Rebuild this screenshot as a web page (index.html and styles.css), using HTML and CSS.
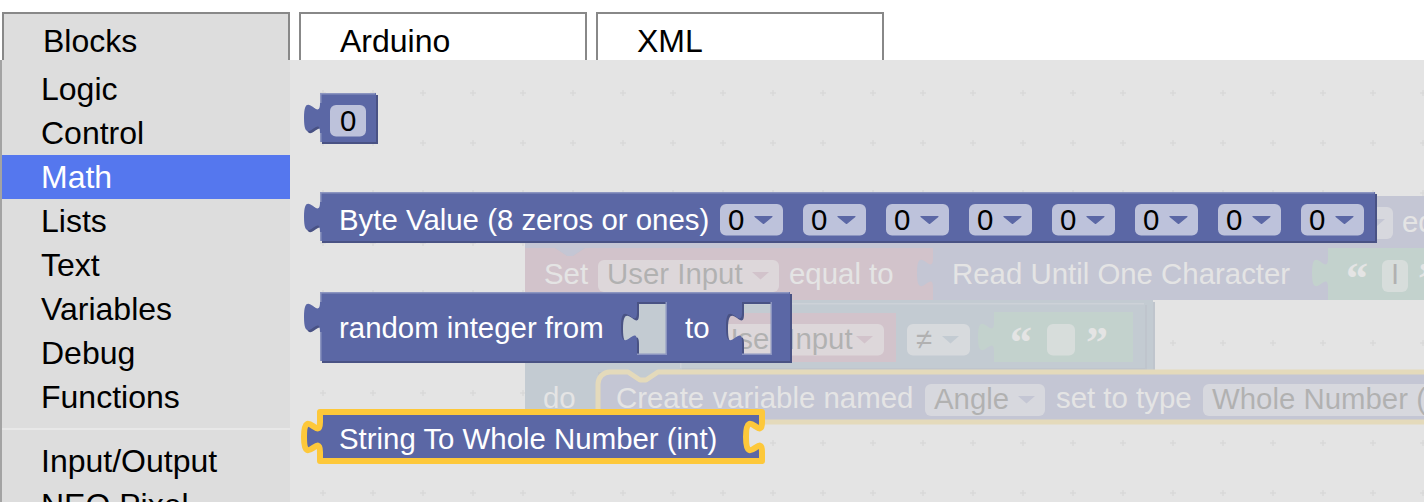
FILE: index.html
```html
<!DOCTYPE html>
<html lang="en">
<head>
<meta charset="utf-8">
<title>Blocks</title>
<link rel="stylesheet" href="styles.css">
</head>
<body>
<div class="app">
  <div class="tabs">
    <div class="tab tab-active">Blocks</div>
    <div class="tab">Arduino</div>
    <div class="tab">XML</div>
  </div>
  <div class="main">
    <div class="toolbox">
      <div class="row">Logic</div>
      <div class="row">Control</div>
      <div class="row row-selected">Math</div>
      <div class="row">Lists</div>
      <div class="row">Text</div>
      <div class="row">Variables</div>
      <div class="row">Debug</div>
      <div class="row">Functions</div>
      <div class="sep"></div>
      <div class="row">Input/Output</div>
      <div class="row">NEO Pixel</div>
    </div>
    <svg class="workspace" width="1134" height="442" viewBox="290 60 1134 442" xmlns="http://www.w3.org/2000/svg">
      <defs>
        <pattern id="grid" patternUnits="userSpaceOnUse" x="298" y="68" width="50" height="50">
          <path d="M22 25H28M25 22V28" stroke="#c6c6c6" stroke-width="1.5"/>
        </pattern>
      </defs>
      <rect x="290" y="60" width="1134" height="442" fill="#ffffff"/>
      <rect x="290" y="60" width="1134" height="442" fill="url(#grid)"/>

      <!-- workspace blocks (seen through the flyout) -->
      <g class="ws">
        <!-- upper block -->
        <path transform="translate(2,2)" fill="#4c5390" d="M525,196 H1500 V248 H585 l-12,8 h-6 l-12,-8 H525 Z"/>
        <path fill="#5f68ad" d="M525,196 H1500 V248 H585 l-12,8 h-6 l-12,-8 H525 Z"/>
        <rect class="fld" x="1210" y="207" width="183" height="32" rx="6"/>
        <polygon fill="#5f68ad" points="1368,219 1385,219 1376.5,226.5"/>
        <text class="bt" x="1402" y="232">equal to</text>

        <!-- if block -->
        <path transform="translate(2,2)" fill="#49668a" d="M525,300 H1153 V372 H658 l-12,8 h-6 l-12,-8 H598 V422 H660 V448 H525 Z"/>
        <path fill="#5b80a5" d="M525,300 H1153 V372 H658 l-12,8 h-6 l-12,-8 H598 V422 H660 V448 H525 Z"/>
        <text class="bt" x="543" y="408">do</text>

        <!-- set block -->
        <path fill="#a55b80" d="M525,248 H555 l12,8 h6 l12,-8 H1500 V300 H525 Z"/>
        <text class="bt" x="544" y="284">Set</text>
        <rect class="fld" x="598" y="260" width="181" height="32" rx="6"/>
        <text class="ft" x="607" y="284">User Input</text>
        <polygon fill="#a55b80" points="752,272 769,272 760.5,279.5"/>
        <text class="bt" x="789" y="284">equal to</text>

        <!-- read block -->
        <path fill="#5f68ad" d="M933,248 H1328 V300 H933 V288 c0,-20 -16,16 -16,-15 s16,5 16,-15 Z"/>
        <text class="bt" x="952" y="284">Read Until One Character</text>

        <!-- text block 1 -->
        <path fill="#5ba58c" d="M1328,248 H1500 V300 H1328 V288 c0,-20 -16,16 -16,-15 s16,5 16,-15 Z"/>
        <text class="qt" x="1346" y="293">“</text>
        <rect class="fld" x="1382" y="260" width="26" height="32" rx="6"/>
        <text class="ft" x="1391" y="284">I</text>
        <text class="qt" x="1418" y="293">”</text>

        <!-- compare block -->
        <path transform="translate(2,2)" fill="#49668a" d="M680,303 H1145 V368 H680 Z"/>
        <path fill="#5b80a5" d="M680,303 H1145 V368 H680 Z"/>
        <path fill="none" stroke="#8ca6c0" stroke-width="1.5" d="M680.75,368 V303.75 H1144"/>

        <!-- variable getter -->
        <path fill="#a55b80" d="M694,313 H896 V362 H694 V353 c0,-20 -16,16 -16,-15 s16,5 16,-15 Z"/>
        <rect class="fld" x="708" y="324" width="176" height="31.5" rx="6"/>
        <text class="ft" x="717" y="349">User Input</text>
        <polygon fill="#a55b80" points="856,336 873,336 864.5,343.5"/>

        <!-- not equal dropdown -->
        <rect class="fld" x="907" y="324" width="63" height="31.5" rx="6"/>
        <text class="ft" x="916" y="349">≠</text>
        <polygon fill="#5b80a5" points="942,336 959,336 950.5,343.5"/>

        <!-- text block 2 -->
        <path fill="#5ba58c" d="M994,312 H1133 V362 H994 V352 c0,-20 -16,16 -16,-15 s16,5 16,-15 Z"/>
        <text class="qt" x="1010" y="357">“</text>
        <rect class="fld" x="1047" y="324" width="28" height="31.5" rx="6"/>
        <text class="qt" x="1086" y="357">”</text>

        <!-- create variable block -->
        <path fill="#5f68ad" stroke="#ffcc33" stroke-width="5" stroke-linejoin="round" d="M598,384 a12,12 0 0 1 12,-12 H628 l12,8 h6 l12,-8 H1500 V422 H598 Z"/>
        <text class="bt" x="616" y="408">Create variable named</text>
        <rect class="fld" x="925" y="384" width="120" height="32" rx="6"/>
        <text class="ft" x="934" y="409">Angle</text>
        <polygon fill="#5f68ad" points="1018,396 1035,396 1026.5,403.5"/>
        <text class="bt" x="1056" y="408">set to type</text>
        <rect class="fld" x="1203" y="384" width="400" height="32" rx="6"/>
        <text class="ft" x="1212" y="409">Whole Number (int)</text>
      </g>

      <!-- flyout background -->
      <rect x="290" y="60" width="1134" height="442" fill="#dddddd" fill-opacity="0.8"/>

      <!-- flyout blocks -->
      <g class="flyout">
        <!-- number block -->
        <path class="dark" transform="translate(2,2)" d="M320,93 h56 v49 h-56 v-9 c0,-20 -16,16 -16,-15 s16,5 16,-15 z"/>
        <path class="math" d="M320,93 h56 v49 h-56 v-9 c0,-20 -16,16 -16,-15 s16,5 16,-15 z"/>
        <path class="hl" d="M320.75,142 V133 M320.75,103 V93.75 H375.25"/>
        <rect class="fld" x="330" y="105" width="36" height="31.5" rx="6"/>
        <text class="ft" x="340" y="130.5">0</text>

        <!-- byte block -->
        <path class="dark" transform="translate(2,2)" d="M320,192 h1055 v49 h-1055 v-9 c0,-20 -16,16 -16,-15 s16,5 16,-15 z"/>
        <path class="math" d="M320,192 h1055 v49 h-1055 v-9 c0,-20 -16,16 -16,-15 s16,5 16,-15 z"/>
        <path class="hl" d="M320.75,241 V232 M320.75,202 V192.75 H1374.25"/>
        <text class="bt" x="339" y="229.5">Byte Value (8 zeros or ones)</text>
        <rect class="fld" x="720" y="204" width="63" height="31.5" rx="6"/>
        <text class="ft" x="728" y="229.5">0</text>
        <polygon class="arrow" points="755,216.5 772,216.5 763.5,223.5"/>
        <rect class="fld" x="803" y="204" width="63" height="31.5" rx="6"/>
        <text class="ft" x="811" y="229.5">0</text>
        <polygon class="arrow" points="838,216.5 855,216.5 846.5,223.5"/>
        <rect class="fld" x="886" y="204" width="63" height="31.5" rx="6"/>
        <text class="ft" x="894" y="229.5">0</text>
        <polygon class="arrow" points="921,216.5 938,216.5 929.5,223.5"/>
        <rect class="fld" x="969" y="204" width="63" height="31.5" rx="6"/>
        <text class="ft" x="977" y="229.5">0</text>
        <polygon class="arrow" points="1004,216.5 1021,216.5 1012.5,223.5"/>
        <rect class="fld" x="1052" y="204" width="63" height="31.5" rx="6"/>
        <text class="ft" x="1060" y="229.5">0</text>
        <polygon class="arrow" points="1087,216.5 1104,216.5 1095.5,223.5"/>
        <rect class="fld" x="1135" y="204" width="63" height="31.5" rx="6"/>
        <text class="ft" x="1143" y="229.5">0</text>
        <polygon class="arrow" points="1170,216.5 1187,216.5 1178.5,223.5"/>
        <rect class="fld" x="1218" y="204" width="63" height="31.5" rx="6"/>
        <text class="ft" x="1226" y="229.5">0</text>
        <polygon class="arrow" points="1253,216.5 1270,216.5 1261.5,223.5"/>
        <rect class="fld" x="1301" y="204" width="63" height="31.5" rx="6"/>
        <text class="ft" x="1309" y="229.5">0</text>
        <polygon class="arrow" points="1336,216.5 1353,216.5 1344.5,223.5"/>

        <!-- random integer block -->
        <path class="dark" transform="translate(2,2)" fill-rule="evenodd" d="M320,292 h470 v69 h-470 v-29 c0,-20 -16,16 -16,-15 s16,5 16,-15 z M637,302 h30 v53 h-30 v-13 c0,-20 -16,16 -16,-15 s16,5 16,-15 z M742,302 h30 v53 h-30 v-13 c0,-20 -16,16 -16,-15 s16,5 16,-15 z"/>
        <path class="math" fill-rule="evenodd" d="M320,292 h470 v69 h-470 v-29 c0,-20 -16,16 -16,-15 s16,5 16,-15 z M637,302 h30 v53 h-30 v-13 c0,-20 -16,16 -16,-15 s16,5 16,-15 z M742,302 h30 v53 h-30 v-13 c0,-20 -16,16 -16,-15 s16,5 16,-15 z"/>
        <path class="hl" d="M320.75,361 V332 M320.75,302 V292.75 H789.25 M666.25,302 V354.25 H637 M771.25,302 V354.25 H742"/>
        <text class="bt" x="339" y="337.5">random integer from</text>
        <text class="bt" x="685" y="337.5">to</text>

        <!-- string to whole number block (selected) -->
        <path class="math selected" d="M320,412 H762 V422 c0,20 -16,-16 -16,15 s16,-5 16,15 V461 H320 V452 c0,-20 -16,16 -16,-15 s16,5 16,-15 Z"/>
        <text class="bt" x="339" y="449">String To Whole Number (int)</text>
      </g>
    </svg>
  </div>
</div>
</body>
</html>
```
FILE: styles.css
```css
html, body {
  margin: 0;
  padding: 0;
  background: #ffffff;
}

body {
  font-family: "Liberation Sans", Arial, Helvetica, sans-serif;
  color: #000000;
  overflow: hidden;
}

.app {
  width: 1424px;
  height: 502px;
  display: flex;
  flex-direction: column;
  overflow: hidden;
}

.tabs {
  display: flex;
  gap: 9px;
  height: 60px;
  box-sizing: border-box;
  padding: 12px 0 0 2px;
}

.tab {
  width: 288px;
  height: 48px;
  box-sizing: border-box;
  border: 2px solid #888888;
  border-bottom: none;
  padding: 8px 0 0 39px;
  font-size: 32px;
  line-height: 38px;
  background: #ffffff;
}

.tab-active {
  background: #dddddd;
}

.main {
  display: flex;
  height: 442px;
}

.toolbox {
  width: 290px;
  flex: none;
  box-sizing: border-box;
  border-left: 2px solid #a3a3a3;
  background: #dddddd;
  padding-top: 7px;
}

.row {
  height: 44px;
  line-height: 44px;
  font-size: 32px;
  padding-left: 39px;
  white-space: nowrap;
}

.row-selected {
  background: #5577ee;
  color: #ffffff;
}

.sep {
  height: 2px;
  background: #e8e8e8;
  margin: 9px 0;
}

.workspace {
  display: block;
  flex: none;
  width: 1134px;
  height: 442px;
}

.bt {
  font-family: "Liberation Sans", Arial, Helvetica, sans-serif;
  font-size: 29.4px;
  fill: #ffffff;
}

.ft {
  font-family: "Liberation Sans", Arial, Helvetica, sans-serif;
  font-size: 29.4px;
  fill: #000000;
}

.qt {
  font-family: "Liberation Serif", "Times New Roman", serif;
  font-weight: bold;
  font-size: 44px;
  fill: #ffffff;
}

.fld {
  fill: #ffffff;
  fill-opacity: 0.6;
}

.math {
  fill: #5b67a5;
}

.dark {
  fill: #495284;
}

.hl {
  fill: none;
  stroke: #8c95c0;
  stroke-width: 1.5;
}

.arrow {
  fill: #5b67a5;
  stroke: #5b67a5;
  stroke-width: 1.2;
  stroke-linejoin: round;
}

.selected {
  stroke: #fdc83a;
  stroke-width: 6;
  stroke-linejoin: round;
}
```
